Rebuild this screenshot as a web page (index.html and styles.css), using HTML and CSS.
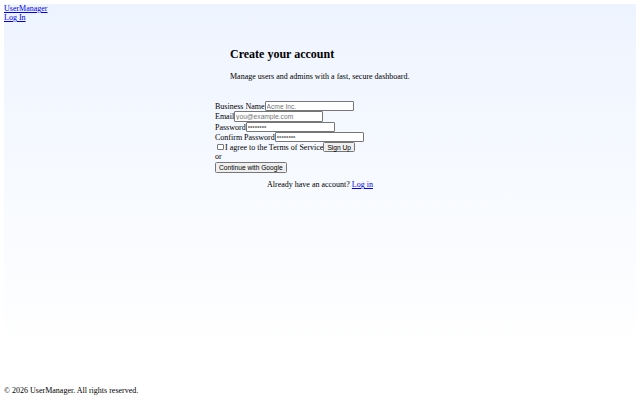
FILE: index.html
```html
<!DOCTYPE html>
<html lang="en">
<head>
<meta charset="utf-8">
<title>Sign up - UserManager</title>
<link rel="stylesheet" href="styles.css">
</head>
<body>
<div class="page">
  <nav class="nav">
    <a class="nav-link" href="#">UserManager</a>
    <a class="nav-link" href="#">Log In</a>
  </nav>
  <main class="auth">
    <header class="auth-head">
      <h2 class="auth-title">Create your account</h2>
      <p class="auth-sub">Manage users and admins with a fast, secure dashboard.</p>
    </header>
    <form class="auth-form">
      <div class="row"><label for="biz">Business Name</label><input class="field" id="biz" type="text" placeholder="Acme Inc."></div>
      <div class="row"><label for="email">Email</label><input class="field" id="email" type="email" placeholder="you@example.com"></div>
      <div class="row"><label for="pw">Password</label><input class="field" id="pw" type="password" placeholder="••••••••"></div>
      <div class="row"><label for="pw2">Confirm Password</label><input class="field" id="pw2" type="password" placeholder="••••••••"></div>
      <div class="row"><label><input class="check" type="checkbox">I agree to the Terms of Service</label><button class="btn" type="submit">Sign Up</button></div>
      <div class="row row-text">or</div>
      <button class="btn" type="button">Continue with Google</button>
    </form>
    <p class="switch">Already have an account? <a href="#">Log in</a></p>
  </main>
</div>
<footer class="footer">
  <p class="footer-text">© 2026 UserManager. All rights reserved.</p>
</footer>
</body>
</html>
```

FILE: styles.css
```css
html, body {
  background: #ffffff;
}
body {
  margin: 4px;
  font-family: "Liberation Serif", "Times New Roman", serif;
  font-size: 8px;
  color: #000000;
}
a {
  color: #0000ee;
}
.page {
  min-height: 348px;
  background: linear-gradient(180deg, #eef4ff 0%, #ffffff 100%);
}
.nav {
  display: flex;
  flex-direction: column;
  align-items: flex-start;
}
.auth {
  width: 210px;
  margin: 0 auto;
}
.auth-head {
  padding: 15px 15px 12px;
}
.auth-title {
  font-size: 12px;
  font-weight: bold;
  margin: 10px 0;
}
.auth-sub {
  margin: 8px 0;
}
.row-text {
  line-height: 10px;
}
.field {
  font-family: "Liberation Sans", Arial, sans-serif;
  font-size: 6.667px;
  width: 85px;
  padding: 0.65px 1px;
  margin: 0;
  border: 1px solid #767676;
  border-radius: 1px;
  background: #ffffff;
  box-sizing: content-box;
}
.field::placeholder {
  color: #757575;
}
.check {
  appearance: none;
  -webkit-appearance: none;
  box-sizing: border-box;
  width: 6.5px;
  height: 6.5px;
  margin: 1.5px 1.5px 1.5px 2px;
  border: 1px solid #767676;
  border-radius: 1px;
  background: #ffffff;
  vertical-align: -2px;
}
.btn {
  font-family: "Liberation Sans", Arial, sans-serif;
  font-size: 6.667px;
  padding: 0.65px 3px;
  margin: 0;
  border: 1px solid #767676;
  border-radius: 1.5px;
  background: #efefef;
  color: #000000;
}
.switch {
  margin: 7.5px 0 8px;
  text-align: center;
}
.footer {
  padding-top: 26px;
}
.footer-text {
  margin: 8px 0;
}
```
